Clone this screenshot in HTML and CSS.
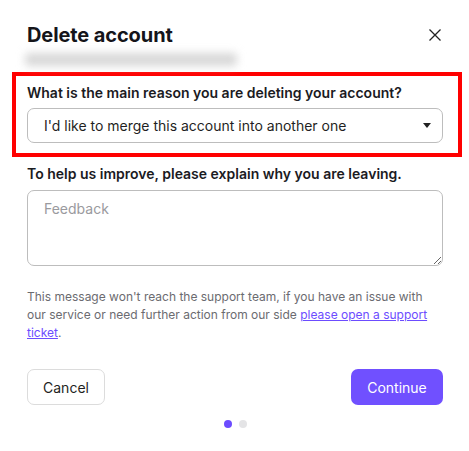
FILE: index.html
```html
<!DOCTYPE html>
<html lang="en">
<head>
<meta charset="utf-8">
<title>Delete account</title>
<link rel="stylesheet" href="styles.css">
</head>
<body>
<div class="dialog">
  <div class="header">
    <h1 class="title">Delete account</h1>
    <button class="close" aria-label="Close">
      <svg width="12" height="12" viewBox="0 0 12 12"><path d="M0.5 0.5 L11.5 11.5 M11.5 0.5 L0.5 11.5" stroke="#222" stroke-width="1.3" fill="none"/></svg>
    </button>
  </div>
  <div class="blurred"></div>
  <div class="highlight">
    <div class="label">What is the main reason you are deleting your account?</div>
    <div class="select">
      <span>I'd like to merge this account into another one</span>
      <svg class="caret" width="8" height="5" viewBox="0 0 8 5"><path d="M0 0 H8 L4 5 Z" fill="#222"/></svg>
    </div>
  </div>
  <div class="label label2">To help us improve, please explain why you are leaving.</div>
  <textarea class="feedback" placeholder="Feedback"></textarea>
  <p class="note">This message won't reach the support team, if you have an issue with our service or need further action from our side <a href="#" class="link">please open a support ticket</a>.</p>
  <div class="actions">
    <button class="btn btn-cancel">Cancel</button>
    <button class="btn btn-continue">Continue</button>
  </div>
  <div class="dots"><span class="dot active"></span><span class="dot"></span></div>
</div>
</body>
</html>
```
FILE: styles.css
```css
* { box-sizing: border-box; }
html, body { margin: 0; background: #fff; }
body { font-family: Inter, "Noto Sans", sans-serif; color: #1b1b1f; }
.dialog { width: 469px; padding: 23px 26px 0 27px; }
.header { display: flex; justify-content: space-between; align-items: center; height: 24px; }
.title { margin: 0; font-size: 20px; line-height: 24px; font-weight: 700; color: #15151a; letter-spacing: -0.1px; }
.close { border: 0; background: none; padding: 0; margin-right: 2px; width: 12px; height: 12px; display: flex; }
.blurred { margin: 6px 0 0 -2px; width: 212px; height: 13px; background: #d8d8d8; filter: blur(4px); border-radius: 4px; }
.highlight { margin: 6px -19px 0 -15px; border: 4px solid #ff0000; padding: 7px 15px 10px 11px; }
.label { font-size: 14px; line-height: 20px; font-weight: 600; color: #1b1b1f; }
.select { margin-top: 5px; height: 35px; border: 1px solid #bdbdbd; border-radius: 7px; display: flex; align-items: center; justify-content: space-between; padding: 0 11px 0 16px; font-size: 14px; color: #1f1f23; }
.caret { display: block; }
.label2 { margin-top: 7px; }
.feedback { display: block; margin-top: 6px; width: 100%; height: 76px; border: 1px solid #bdbdbd; border-radius: 7px; padding: 9px 16px; font-family: inherit; font-size: 14px; line-height: 18px; resize: vertical; }
.feedback::placeholder { color: #9a9a9e; }
.note { margin: 22px 0 0; padding-right: 7px; font-size: 12px; line-height: 18px; color: #6b6b70; }
.link { color: #6c4cff; text-decoration: underline; }
.actions { margin-top: 27px; display: flex; justify-content: space-between; }
.btn { height: 36px; border-radius: 7px; font-family: inherit; font-size: 14px; padding: 0; }
.btn-cancel { width: 78px; background: #fff; border: 1px solid #dcdcdc; color: #1f1f23; }
.btn-continue { width: 92px; background: #7050ff; border: 0; color: #fff; }
.dots { margin-top: 15px; display: flex; justify-content: center; gap: 7px; padding-left: 1px; }
.dot { width: 8px; height: 8px; border-radius: 50%; background: #e4e4e6; }
.dot.active { background: #6c4cff; }
```
